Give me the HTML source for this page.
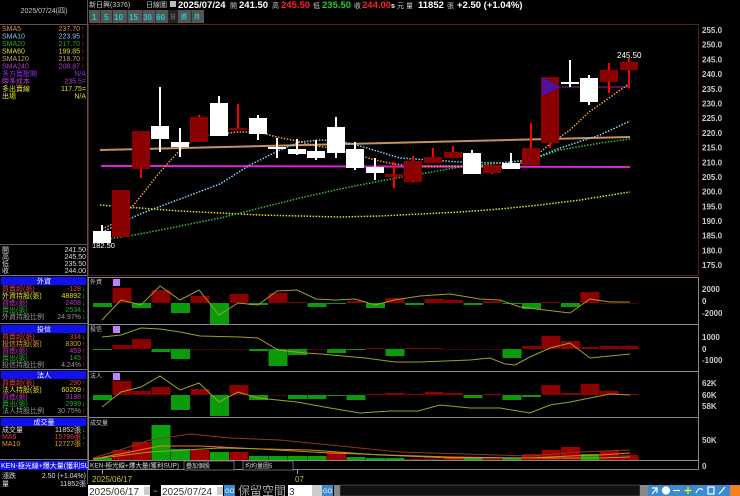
<!DOCTYPE html>
<html><head><meta charset="utf-8"><style>
html,body{margin:0;padding:0;background:#000;width:740px;height:496px;overflow:hidden}
svg{display:block}
text{font-family:"Liberation Sans","Noto Sans CJK TC",sans-serif}
.s{font-size:7px}
.ax{font-size:8px;fill:#ccc;font-weight:bold}
.b{font-weight:bold}
</style></head><body>
<svg id="c" width="740" height="496" viewBox="0 0 740 496" xmlns="http://www.w3.org/2000/svg">
<rect width="740" height="496" fill="#000"/>
<line x1="87.5" y1="0" x2="87.5" y2="484" stroke="#555"/>
<text x="44" y="13" class="s" fill="#ccc" text-anchor="middle">2025/07/24(四)</text>
<line x1="0" y1="24.5" x2="87" y2="24.5" stroke="#555"/>
<g class="s">
<text x="2" y="31" fill="#e09040">SMA5</text><text x="80" y="31" fill="#e09040" text-anchor="end">237.70</text><text x="81" y="31" fill="#f22">↑</text>
<text x="2" y="38.5" fill="#80c8ff">SMA10</text><text x="80" y="38.5" fill="#80c8ff" text-anchor="end">223.95</text><text x="81" y="38.5" fill="#f22">↑</text>
<text x="2" y="46" fill="#20b020">SMA20</text><text x="80" y="46" fill="#20b020" text-anchor="end">217.70</text><text x="81" y="46" fill="#f22">↑</text>
<text x="2" y="53.5" fill="#e0e020">SMA60</text><text x="80" y="53.5" fill="#e0e020" text-anchor="end">199.85</text><text x="81" y="53.5" fill="#f22">↑</text>
<text x="2" y="61" fill="#c8a070">SMA120</text><text x="80" y="61" fill="#c8a070" text-anchor="end">218.70</text><text x="81" y="61" fill="#f22">↑</text>
<text x="2" y="68.5" fill="#b040d0">SMA240</text><text x="80" y="68.5" fill="#b040d0" text-anchor="end">208.87</text><text x="81" y="68.5" fill="#f22">↑</text>
<text x="2" y="76" fill="#9030e0">多方賣壓開</text><text x="86" y="76" fill="#9030e0" text-anchor="end">N/A</text>
<text x="2" y="83.5" fill="#b040d0">瞬多成本</text><text x="86" y="83.5" fill="#b040d0" text-anchor="end">235.5=</text>
<text x="2" y="91" fill="#e0e020">多出賣線</text><text x="86" y="91" fill="#e0e020" text-anchor="end">117.75=</text>
<text x="2" y="98.5" fill="#e0e020">出場</text><text x="86" y="98.5" fill="#e0e020" text-anchor="end">N/A</text>
</g>
<line x1="0" y1="244.5" x2="87" y2="244.5" stroke="#555"/>
<g class="s" fill="#ddd">
<text x="2" y="252">開</text><text x="86" y="252" text-anchor="end">241.50</text>
<text x="2" y="259">高</text><text x="86" y="259" text-anchor="end">245.50</text>
<text x="2" y="266">低</text><text x="86" y="266" text-anchor="end">235.50</text>
<text x="2" y="273">收</text><text x="86" y="273" text-anchor="end">244.00</text>
</g>
<line x1="0" y1="275.5" x2="87" y2="275.5" stroke="#777"/>
<rect x="1" y="277" width="85" height="8" fill="#1010f0"/>
<text x="44" y="283.5" class="s" fill="#fff" text-anchor="middle">外資</text>
<g class="s">
<text x="2" y="291" fill="#e04040">買賣超(張)</text><text x="81" y="291" fill="#e04040" text-anchor="end">-128</text><text x="82" y="291" fill="#2c2">↓</text>
<text x="2" y="298" fill="#e0e020">外資持股(張)</text><text x="81" y="298" fill="#e0e020" text-anchor="end">48892</text><text x="82" y="298" fill="#2c2">↓</text>
<text x="2" y="305" fill="#c030c0">買進(張)</text><text x="81" y="305" fill="#c030c0" text-anchor="end">2408</text><text x="82" y="305" fill="#2c2">↓</text>
<text x="2" y="312" fill="#20b020">賣出(張)</text><text x="81" y="312" fill="#20b020" text-anchor="end">2534</text><text x="82" y="312" fill="#2c2">↓</text>
<text x="2" y="319" fill="#999">外資持股比例</text><text x="81" y="319" fill="#999" text-anchor="end">24.97%</text><text x="82" y="319" fill="#2c2">↓</text>
</g>
<line x1="0" y1="323.5" x2="87" y2="323.5" stroke="#777"/>
<rect x="1" y="325" width="85" height="8" fill="#1010f0"/>
<text x="44" y="331.5" class="s" fill="#fff" text-anchor="middle">投信</text>
<g class="s">
<text x="2" y="339" fill="#e04040">買賣超(張)</text><text x="81" y="339" fill="#e04040" text-anchor="end">314</text><text x="82" y="339" fill="#2c2">↓</text>
<text x="2" y="346" fill="#e0a020">投信持股(張)</text><text x="81" y="346" fill="#e0a020" text-anchor="end">8300</text><text x="82" y="346" fill="#f22">↑</text>
<text x="2" y="353" fill="#c030c0">買進(張)</text><text x="81" y="353" fill="#c030c0" text-anchor="end">459</text><text x="82" y="353" fill="#f22">↑</text>
<text x="2" y="360" fill="#20b020">賣出(張)</text><text x="81" y="360" fill="#20b020" text-anchor="end">145</text><text x="82" y="360" fill="#f22">↑</text>
<text x="2" y="367" fill="#999">投信持股比例</text><text x="81" y="367" fill="#999" text-anchor="end">4.24%</text><text x="82" y="367" fill="#f22">↑</text>
</g>
<line x1="0" y1="369.5" x2="87" y2="369.5" stroke="#777"/>
<rect x="1" y="371" width="85" height="8" fill="#1010f0"/>
<text x="44" y="377.5" class="s" fill="#fff" text-anchor="middle">法人</text>
<g class="s">
<text x="2" y="385" fill="#e04040">買賣超(張)</text><text x="81" y="385" fill="#e04040" text-anchor="end">290</text><text x="82" y="385" fill="#f22">↑</text>
<text x="2" y="392" fill="#e0e020">法人持股(張)</text><text x="81" y="392" fill="#e0e020" text-anchor="end">60209</text><text x="82" y="392" fill="#f22">↑</text>
<text x="2" y="399" fill="#c030c0">買進(張)</text><text x="81" y="399" fill="#c030c0" text-anchor="end">3198</text><text x="82" y="399" fill="#f22">↑</text>
<text x="2" y="406" fill="#20b020">賣出(張)</text><text x="81" y="406" fill="#20b020" text-anchor="end">2999</text><text x="82" y="406" fill="#2c2">↓</text>
<text x="2" y="413" fill="#999">法人持股比例</text><text x="81" y="413" fill="#999" text-anchor="end">30.75%</text><text x="82" y="413" fill="#f22">↑</text>
</g>
<line x1="0" y1="416.5" x2="87" y2="416.5" stroke="#777"/>
<rect x="1" y="418" width="85" height="8" fill="#1010f0"/>
<text x="44" y="424.5" class="s" fill="#fff" text-anchor="middle">成交量</text>
<g class="s">
<text x="2" y="432" fill="#ddd">成交量</text><text x="81" y="432" fill="#ddd" text-anchor="end">11852張</text><text x="82" y="432" fill="#2c2">↓</text>
<text x="2" y="439" fill="#e04040">MA5</text><text x="81" y="439" fill="#e04040" text-anchor="end">15796張</text><text x="82" y="439" fill="#2c2">↓</text>
<text x="2" y="446" fill="#e0a020">MA10</text><text x="81" y="446" fill="#e0a020" text-anchor="end">12727張</text><text x="82" y="446" fill="#f22">↑</text>
</g>
<line x1="0" y1="459.5" x2="87" y2="459.5" stroke="#777"/>
<rect x="0" y="461" width="87" height="9" fill="#1010f0"/>
<text x="1" y="468" class="s" fill="#fff">KEN-極光線+爆大量(獲利SUP)</text>
<g class="s" fill="#ddd">
<text x="2" y="478">漲跌</text><text x="86" y="478" text-anchor="end">2.50 (+1.04%)</text>
<text x="2" y="486">量</text><text x="86" y="486" text-anchor="end">11852張</text>
</g>

<g font-size="7px" fill="#ccc">
<text x="89" y="7">新日興(3376)</text>
<text x="146" y="7">日線圖</text>
</g>
<rect x="170" y="1" width="6" height="6" fill="#bbb"/>
<g font-size="9.5px" class="b">
<text x="178" y="8" fill="#fff">2025/07/24</text>
<text x="230" y="8" fill="#ccc" font-size="7px" font-weight="normal">開</text>
<text x="239" y="8" fill="#fff">241.50</text>
<text x="272" y="8" fill="#ccc" font-size="7px" font-weight="normal">高</text>
<text x="281" y="8" fill="#f22">245.50</text>
<text x="313" y="8" fill="#ccc" font-size="7px" font-weight="normal">低</text>
<text x="322" y="8" fill="#2c2">235.50</text>
<text x="354" y="8" fill="#ccc" font-size="7px" font-weight="normal">收</text>
<text x="362" y="8" fill="#f22">244.00</text>
<text x="391" y="8" fill="#fff" font-size="7px">s</text>
<text x="397" y="8" fill="#ccc" font-size="7px" font-weight="normal">元  量</text>
<text x="418" y="8" fill="#fff">11852</text>
<text x="447" y="8" fill="#ccc" font-size="7px" font-weight="normal">張</text>
<text x="457" y="8" fill="#fff">+2.50 (+1.04%)</text>
</g>
<g font-size="8px" fill="#2cc" class="b">
<rect x="89" y="10" width="79" height="13" fill="#555"/>
<rect x="168" y="10" width="10" height="13" fill="#222"/>
<rect x="178" y="10" width="26" height="13" fill="#555"/>
<g stroke="#333"><line x1="100.5" y1="10" x2="100.5" y2="23"/><line x1="112.5" y1="10" x2="112.5" y2="23"/><line x1="127.5" y1="10" x2="127.5" y2="23"/><line x1="142.5" y1="10" x2="142.5" y2="23"/><line x1="155.5" y1="10" x2="155.5" y2="23"/><line x1="191.5" y1="10" x2="191.5" y2="23"/></g>
<text x="92" y="20">1</text><text x="104" y="20">5</text><text x="114" y="20">10</text><text x="129" y="20">15</text><text x="143" y="20">30</text><text x="156" y="20">60</text>
<text x="170" y="19" font-size="6px" fill="#666">日</text><text x="181" y="19" font-size="6px">週</text><text x="194" y="19" font-size="6px">月</text>
</g>

<rect x="88.5" y="24.5" width="610" height="251" fill="none" stroke="#502020"/>
<g class="ax">
<text x="702" y="33">255.0</text><text x="702" y="47.7">250.0</text><text x="702" y="62.4">245.0</text><text x="702" y="77">240.0</text><text x="702" y="91.8">235.0</text><text x="702" y="106.5">230.0</text><text x="702" y="121.2">225.0</text><text x="702" y="135.9">220.0</text><text x="702" y="150.6">215.0</text><text x="702" y="165.3">210.0</text><text x="702" y="180">205.0</text><text x="702" y="194.6">200.0</text><text x="702" y="209.3">195.0</text><text x="702" y="224">190.0</text><text x="702" y="238.7">185.0</text><text x="702" y="253.4">180.0</text><text x="702" y="268">175.0</text>
</g>
<line x1="100" y1="150" x2="630" y2="137" stroke="#c8905a" stroke-width="2"/>
<line x1="101" y1="166" x2="630" y2="167" stroke="#e020e0" stroke-width="2"/>
<line x1="562" y1="87" x2="630" y2="87" stroke="#e020e0" stroke-width="0.8"/>
<g fill="none" stroke-width="1.5" stroke-dasharray="1.5 1.5">
<polyline stroke="#e0e020" points="100,205 140,208 180,211 220,213 260,215 300,216 340,217 380,216 420,214 460,212 500,209 540,205 580,200 630,192"/>
<polyline stroke="#30c030" points="102,240 140,234 180,226 220,218 260,208 300,198 340,189 380,181 420,174 460,167 500,163 530,160 560,150 600,143 630,139"/>
<polyline stroke="#80d0ff" points="102,232 140,214 180,199 220,184 250,165 280,150 300,142 320,140 340,141 360,146 380,152 400,158 430,160 460,162 500,163 530,160 560,148 600,135 630,121"/>
<polyline stroke="#f0a040" points="102,229 121,220 141,196 160,172 180,150 199,136 219,134 238,132 258,132 277,137 297,141 316,146 336,149 355,154 375,160 394,164 414,166 433,166 453,166 472,166 492,166 511,166 531,160 550,144 570,130 589,112 609,98 629,84"/>
</g>
<g id="candles"></g>
<polygon points="542,77 561,87 542,96" fill="#5010a0"/>
<text x="617" y="58" font-size="8px" fill="#fff">245.50</text>
<text x="92" y="248" font-size="7.5px" fill="#fff">182.50</text>

<g fill="none" stroke="#888">
<rect x="88.5" y="277.5" width="610" height="47"/>
<rect x="88.5" y="324.5" width="610" height="47"/>
<rect x="88.5" y="371.5" width="610" height="46"/>
<rect x="88.5" y="417.5" width="610" height="43"/>
<rect x="88.5" y="460.5" width="610" height="9"/>
</g>
<g font-size="6px" fill="#ccc"><text x="90" y="284">外資</text><text x="90" y="331">投信</text><text x="90" y="378">法人</text><text x="90" y="425">成交量</text></g>
<g fill="#c080ff"><rect x="113" y="279" width="7" height="7"/><rect x="113" y="326" width="7" height="7"/><rect x="113" y="373" width="7" height="7"/></g>
<g id="bars"></g>
<g class="ax">
<text x="702" y="292">2000</text><text x="702" y="304">0</text><text x="702" y="316">-2000</text>
<text x="702" y="340">1000</text><text x="702" y="352">0</text><text x="702" y="363">-1000</text>
<text x="702" y="386">62K</text><text x="702" y="398">60K</text><text x="702" y="409">58K</text>
<text x="702" y="443">50K</text><text x="702" y="469">0</text>
</g>
<g fill="none" stroke-width="1">
<polyline stroke="#a0a020" points="102,320 121,300 141,305 160,286 180,300 199,290 219,315 238,303 258,305 277,291 297,290 316,299 336,300 355,299 375,305 394,300 420,296 450,294 480,299 500,300 520,307 545,310 570,313 590,299 610,302 630,302"/>
<polyline stroke="#a0a020" points="102,337 121,335 141,328 160,329 180,332 200,336 240,337 258,338 278,350 305,353 321,354 365,358 395,362 420,362 470,360 490,358 505,364 515,365 530,357 550,348 570,343 590,358 630,354"/>
<polyline stroke="#a0a020" points="102,407 121,392 141,387 160,376 180,390 199,383 219,402 238,392 258,398 297,402 330,408 360,413 390,411 418,411 440,405 470,408 500,408 530,413 550,405 570,402 590,398 610,394 630,395"/>
<polyline stroke="#8a3a1a" points="93,458 120,450 150,440 190,434 230,438 280,440 330,445 400,452 530,456 580,452 630,450"/>
<polyline stroke="#ff7020" points="93,459 130,452 160,446 200,446 260,449 330,453 450,457 530,458 570,456 600,455 630,453"/>
<polyline stroke="#a0a020" points="93,459 150,452 220,448 310,450 380,455 450,458 600,458 630,457"/>
</g>
<rect x="89" y="461" width="120" height="8" fill="#000"/>
<text x="90" y="467.5" font-size="6.5px" fill="#ddd">KEN-極光線+爆大量(獲利SUP)</text>
<rect x="184" y="461" width="50" height="9" fill="#000" stroke="#aaa" stroke-width="0.6"/>
<text x="186" y="468" font-size="6px" fill="#ddd">疊加個股</text>
<rect x="243" y="461" width="50" height="9" fill="#000" stroke="#aaa" stroke-width="0.6"/>
<text x="245" y="468" font-size="6px" fill="#ddd">均均量圖5</text>
<line x1="102.5" y1="470" x2="102.5" y2="474" stroke="#aaa"/>
<line x1="297.5" y1="470" x2="297.5" y2="474" stroke="#aaa"/>
<text x="92" y="482" font-size="8px" fill="#c8c030">2025/06/17</text>
<text x="295" y="482" font-size="8px" fill="#c8c030">07</text>

<rect x="88" y="485" width="62" height="11" fill="#fff"/>
<text x="89" y="495" font-size="10px" fill="#333">2025/06/17</text>
<rect x="144" y="487" width="6" height="8" fill="#ccc"/>
<text x="153" y="494" font-size="8px" fill="#ccc">~</text>
<rect x="161" y="485" width="62" height="11" fill="#fff"/>
<text x="162" y="495" font-size="10px" fill="#333">2025/07/24</text>
<rect x="217" y="487" width="6" height="8" fill="#ccc"/>
<rect x="224" y="485" width="11" height="11" fill="#3a8ad0"/>
<text x="225" y="493" font-size="6px" fill="#fff">GO</text>
<text x="238" y="495" font-size="12px" fill="#aaa">保留空間</text>
<rect x="288" y="485" width="24" height="11" fill="#fff"/>
<text x="289" y="495" font-size="10px" fill="#333">3</text>
<rect x="312" y="485" width="10" height="11" fill="#ccc"/>
<rect x="322" y="485" width="11" height="11" fill="#3a8ad0"/>
<text x="323" y="493" font-size="6px" fill="#fff">GO</text>
<rect x="334" y="485" width="6" height="11" fill="#888"/>
<rect x="340" y="485" width="300" height="11" fill="#111" stroke="#666" stroke-width="0.6"/>
<rect x="640" y="485" width="8" height="11" fill="#888"/>
<rect x="648" y="485" width="92" height="11" fill="#3a8ad0"/>
<g stroke="#fff" stroke-width="1.2" fill="none">
<path d="M652 494 L657 488 M652 488 L657 488 L657 493"/>
<circle cx="666" cy="490.5" r="3.5" fill="#fff"/>
<line x1="673" y1="490.5" x2="680" y2="490.5"/>
<path d="M688 487 V494 M684.5 490.5 H691.5" stroke="#ff0"/>
<path d="M696 493 Q699 486 703 490"/>
<rect x="708" y="487" width="6" height="7"/>
<path d="M719 494 L725 487"/>
</g>
<rect x="730" y="485" width="10" height="11" fill="#f08020"/>
</svg>
<script>
(function(){
var NS="http://www.w3.org/2000/svg";
function el(p,t,a){var e=document.createElementNS(NS,t);for(var k in a)e.setAttribute(k,a[k]);p.appendChild(e);return e;}
var C=[[102,231,243,225,243,'w'],[121,190,237,190,237,'r'],[141,131,169,131,178,'r'],[160,126,139,87,152,'w'],[180,142,147,128,157,'w'],[199,117,142,115,142,'r'],[219,103,136,96,136,'w'],[238,128,130,104,130,'r'],[258,118,134,115,140,'w'],[277,147,149,138,158,'w'],[297,149,154,139,155,'w'],[316,151,158,140,160,'w'],[336,127,153,117,158,'w'],[355,149,168,142,170,'w'],[375,167,173,158,180,'w'],[394,174,177,162,188,'r'],[413,161,182,156,183,'r'],[433,157,163,148,163,'r'],[453,152,158,146,158,'r'],[472,153,174,150,174,'w'],[492,165,173,165,174,'r'],[511,163,169,153,169,'w'],[531,148,165,123,165,'r'],[550,77,143,77,148,'r'],[570,82,84,60,87,'w'],[589,78,102,75,105,'w'],[609,70,82,63,93,'r'],[629,62,70,58,88,'r']];
var g=document.getElementById('candles');
C.forEach(function(c){var w=c[5]=='w';
el(g,'rect',{x:c[0]-1,y:c[3],width:2,height:c[4]-c[3],fill:w?'#fff':'#f00'});
el(g,'rect',{x:c[0]-9,y:c[1],width:18,height:Math.max(2,c[2]-c[1]),fill:w?'#fff':'#8b0000'});});
var b=document.getElementById('bars');
var P1=[-4,15,-5,13,-10,7,-21,9,-2,10,1,-4,-1,2,-5,5,-2,4,3,-2,2,-1,-6,1,-4,11,0,0];
var P2=[-1,4,10,-3,-10,0,0,0,-2,-17,-6,0,-4,-1,1,-7,1,1,0,0,0,-9,3,13,8,2,3,3];
var P3=[-5,14,4,8,-15,6,-21,10,-5,0,-4,-4,-1,-5,1,2,1,3,2,-3,1,-5,-2,10,2,11,4,1];
var V=[458,450,442,425,449,450,452,452,456,456,456,456,452,457,458,458,459,459,458,458,459,458,454,450,447,454,451,455];
var VC='grrggrgrggggrgggrrrgrgrrrgrr';
function pan(a,z){a.forEach(function(v,i){var x=93+i*19.5;if(v==0){el(b,'rect',{x:x,y:z,width:19,height:0.8,fill:'#600'});return;}
el(b,'rect',{x:x,y:v>0?z-v:z,width:19,height:Math.abs(v),fill:v>0?'#8b0000':'#0a9a0a'});});}
pan(P1,303);pan(P2,349);pan(P3,395);
V.forEach(function(t,i){var x=93+i*19.5;el(b,'rect',{x:x,y:t,width:19,height:460-t,fill:VC[i]=='r'?'#a00000':'#0aa00a'});});
})();
</script>
</body></html>
